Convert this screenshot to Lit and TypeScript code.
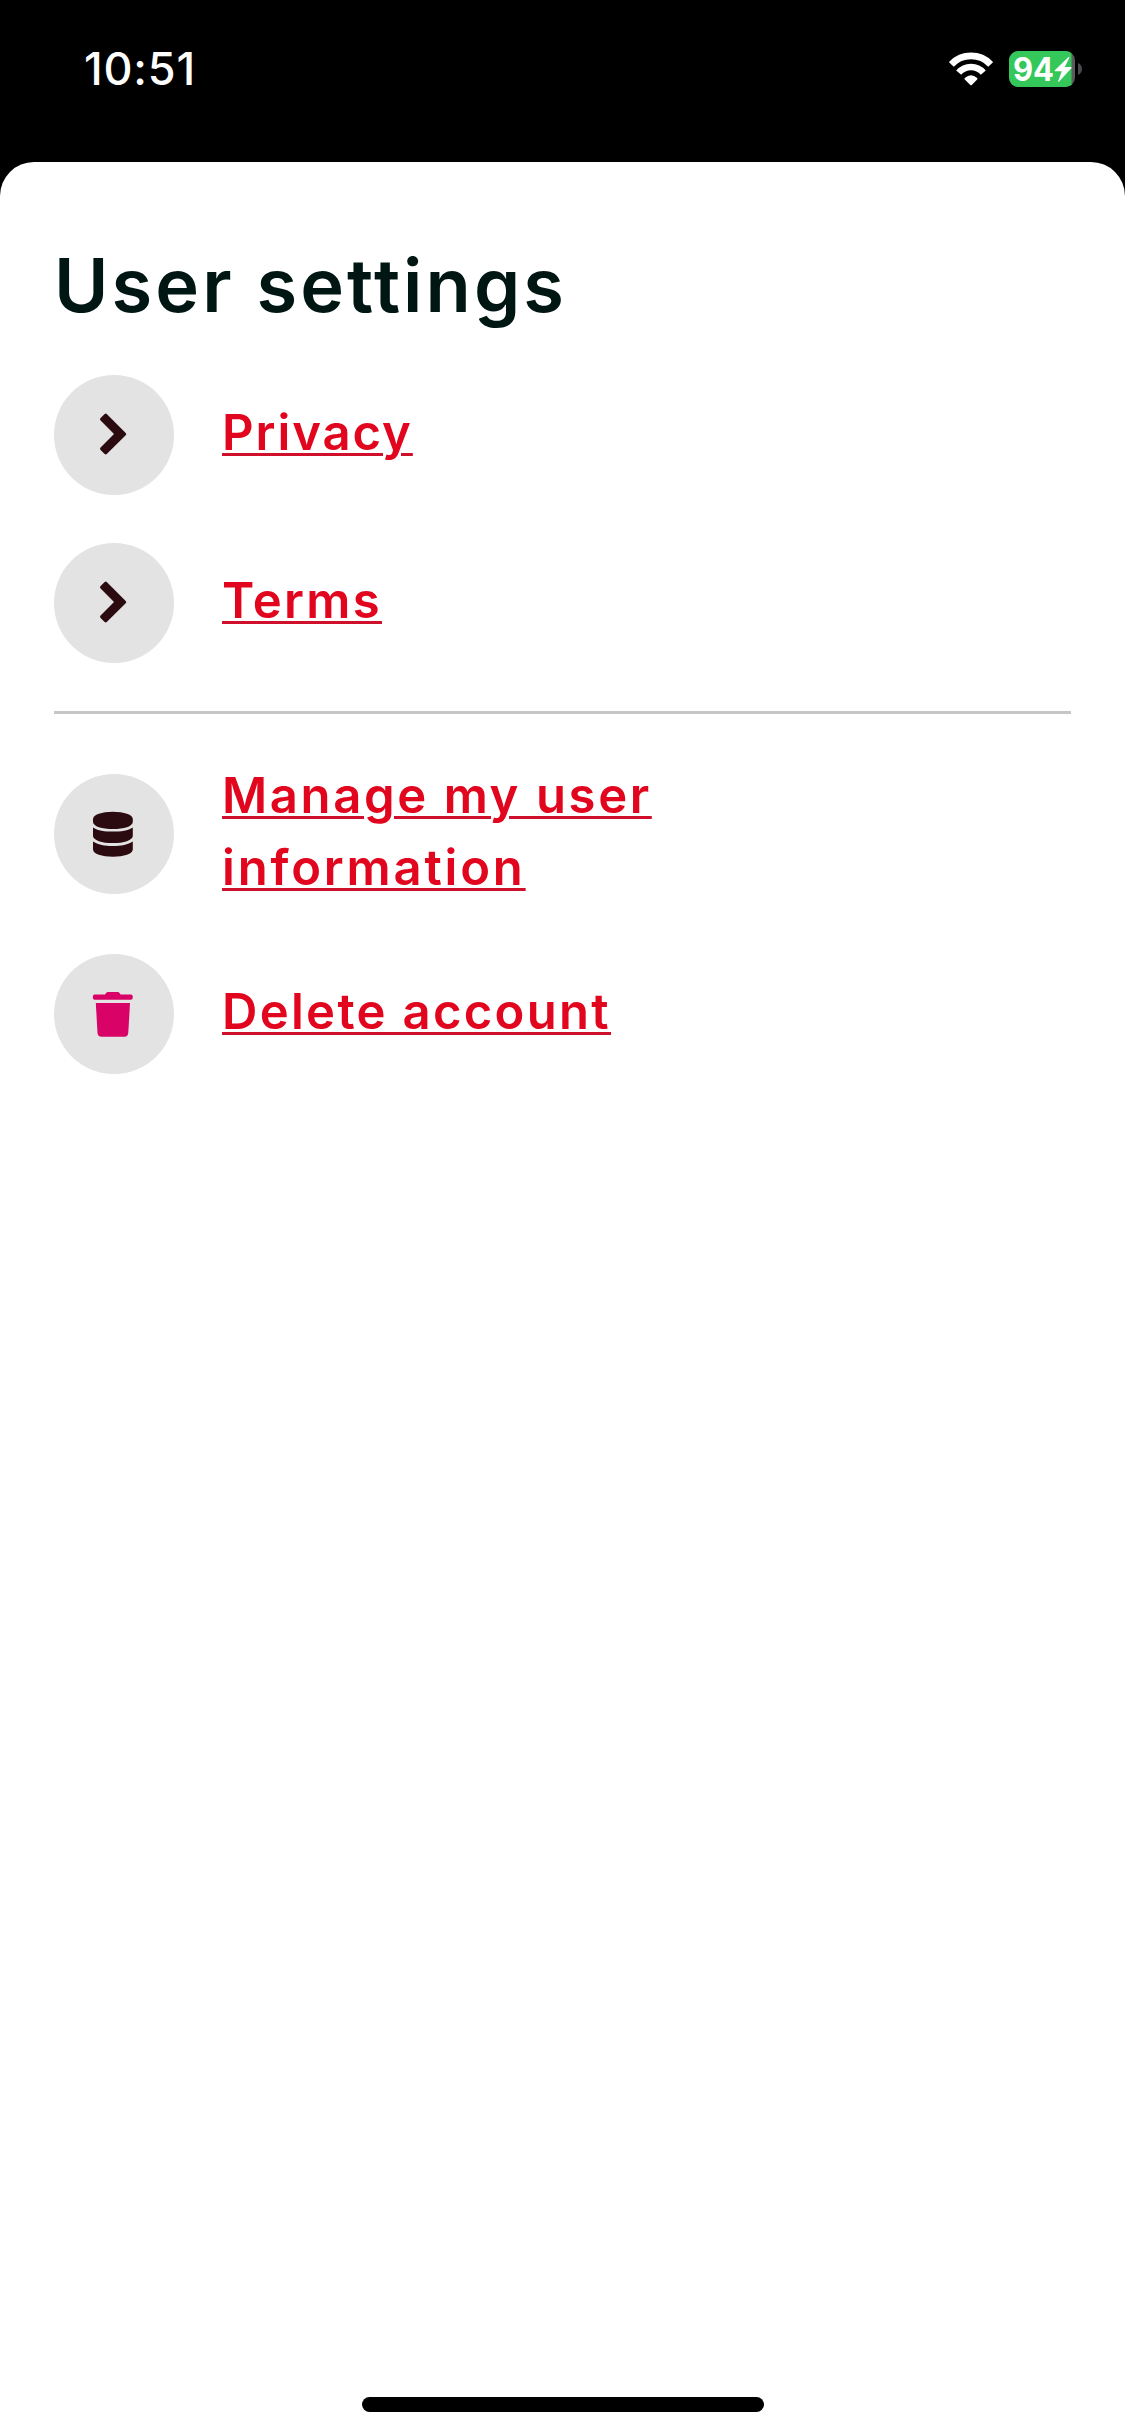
import { LitElement, html, css, svg } from "lit";
import { customElement, property } from "lit/decorators.js";
import { styleMap } from "lit/directives/style-map.js";

const icons = {
  chevron: svg`<path d="M16.600 15.600q-1.300-1.300 0-2.600l3.800-3.800q1.300-1.300 2.600 0l18.700 18.700q1.200 1.200 0 2.300l-18.700 18.600q-1.300 1.300-2.600 0l-3.800-3.800q-1.300-1.300 0-2.600L30 29z" />`,
  database: svg`<path d="M9 15.200c0-4.700 9-7.500 19.900-7.500s19.900 2.800 19.900 7.500v2.500c0 4.700-9 7.300-19.900 7.300s-19.900-2.600-19.900-7.300z" />
    <path d="M9 23.400c4.500 3 12 4.200 19.900 4.200s15.400-1.200 19.900-4.200v8.300c0 4.600-9 7.400-19.900 7.400s-19.900-2.800-19.900-7.400z" />
    <path d="M9 37.400c4.500 3.200 12 4.500 19.900 4.500s15.400-1.300 19.900-4.500v7.800c0 4.700-9 7.500-19.900 7.500s-19.900-2.800-19.900-7.500z" />`,
  trash: svg`<path d="M10.600 10.600h10.400l1.100-1.700q.6-1 1.900-1h9.600q1.300 0 1.900 1l1.100 1.700h10.400q1.700 0 1.700 1.700v1.800q0 1.700-1.700 1.700h-36.400q-1.700 0-1.700-1.700v-1.800q0-1.700 1.700-1.700z" />
    <path d="M11.800 19h34.200l-1.700 29.700q-.3 4-4 4h-22.800q-3.700 0-4-4z" />`,
};

interface Line {
  text: string;
  tracking: number;
}

interface Entry {
  icon: keyof typeof icons;
  lines: Line[];
}

const legal: Entry[] = [
  { icon: "chevron", lines: [{ text: "Privacy", tracking: 1.93 }] },
  { icon: "chevron", lines: [{ text: "Terms", tracking: 2.3 }] },
];

const account: Entry[] = [
  {
    icon: "database",
    lines: [
      { text: "Manage my user", tracking: 2.61 },
      { text: "information", tracking: 2.82 },
    ],
  },
  { icon: "trash", lines: [{ text: "Delete account", tracking: 2.31 }] },
];

@customElement("settings-row")
class SettingsRow extends LitElement {
  @property({ attribute: false }) entry!: Entry;

  static styles = css`
    :host {
      display: flex;
      align-items: center;
      gap: 48px;
    }
    .badge {
      flex: none;
      width: 120px;
      height: 120px;
      border-radius: 50%;
      background: #e3e3e3;
      display: flex;
      align-items: center;
      justify-content: center;
      color: #2b0a10;
    }
    .badge.trash {
      color: #d90368;
    }
    .icon {
      width: 60px;
      height: 60px;
      fill: currentColor;
    }
    .label {
      display: flex;
      flex-direction: column;
      align-items: flex-start;
      padding-bottom: 4px;
      margin: -2px 0;
      font: 600 49px/72px Inter, sans-serif;
      color: #e1051e;
    }
    .line {
      text-decoration: underline;
      text-decoration-color: #d00f2b;
      text-decoration-thickness: 3px;
      text-underline-offset: 3px;
    }
  `;

  render() {
    const { icon, lines } = this.entry;
    return html`<span class="badge ${icon}">
        <svg class="icon" viewBox="0 0 60 60">${icons[icon]}</svg>
      </span>
      <a class="label">
        ${lines.map(
          (l) => html`<span class="line" style=${styleMap({ letterSpacing: `${l.tracking}px` })}>${l.text}</span>`,
        )}
      </a>`;
  }
}

@customElement("app-root")
class AppRoot extends LitElement {
  static styles = css`
    :host {
      display: block;
    }
    .screen {
      height: 2436px;
      display: flex;
      flex-direction: column;
      background: #000;
      font-family: Inter, sans-serif;
      overflow: hidden;
    }
    .status {
      flex: none;
      box-sizing: border-box;
      height: 162px;
      padding: 42px 43px 66px 84px;
      display: flex;
      align-items: center;
      color: #fff;
    }
    .time {
      font-size: 45px;
      font-weight: 550;
      line-height: 54px;
      letter-spacing: 0.8px;
      margin-right: auto;
    }
    .wifi {
      width: 44px;
      height: 34px;
      margin-right: 16px;
      fill: none;
      stroke: #fff;
    }
    .wifi .dot {
      fill: #fff;
      stroke-width: 2;
      stroke-linejoin: round;
    }
    .battery {
      width: 73px;
      height: 36px;
      overflow: visible;
    }
    .percent {
      font: 700 32px Inter, sans-serif;
      fill: #fff;
    }
    .sheet {
      flex: 1;
      box-sizing: border-box;
      padding: 69px 54px 24px;
      background: #fff;
      border-radius: 34px 34px 0 0;
      display: flex;
      flex-direction: column;
    }
    .title {
      margin: 0 0 36px;
      font-size: 74px;
      font-weight: 600;
      line-height: 108px;
      letter-spacing: 3.1px;
      color: #001612;
    }
    .list {
      display: flex;
      flex-direction: column;
      gap: 48px;
    }
    .rule {
      height: 3px;
      background: #c6c6c6;
    }
    .home {
      margin: auto auto 0;
      width: 402px;
      height: 15px;
      border-radius: 8px;
      background: #000;
    }
  `;

  render() {
    return html`<div class="screen">
      <div class="status">
        <span class="time">10:51</span>
        <svg class="wifi" viewBox="0 0 44 34">
          <path d="M2.300 12.400A27.200 27.200 0 0 1 41.700 12.400" stroke-width="6.800" />
          <path d="M9.700 20.700A16.200 16.200 0 0 1 34.300 20.700" stroke-width="6.600" />
          <path class="dot" d="M16.500 26.700Q22 21.800 27.500 26.700L22 32.300z" />
        </svg>
        <svg class="battery" viewBox="0 0 73 36">
          <defs><clipPath id="body"><rect width="66" height="36" rx="9.500" /></clipPath></defs>
          <g clip-path="url(#body)">
            <rect width="66" height="36" fill="#5b5b5d" />
            <rect width="62.500" height="36" fill="#34c759" />
          </g>
          <path d="M69 12q4 1.800 4 6t-4 6z" fill="#4a4a4c" />
          <text class="percent" x="4" y="29.700" textLength="41" lengthAdjust="spacingAndGlyphs">94</text>
          <path d="M59.500 6L45.800 19.300q-.5 1 .6 1h6.400L49 30.500q.4.700 1.200 0L62.500 17q.4-1-.6-1h-6.200L60.500 6.500q-.2-.8-1-.5z" fill="#fff" />
        </svg>
      </div>
      <main class="sheet">
        <h1 class="title">User settings</h1>
        <div class="list">
          ${legal.map((e) => html`<settings-row .entry=${e}></settings-row>`)}
          <div class="rule"></div>
          ${account.map((e) => html`<settings-row .entry=${e}></settings-row>`)}
        </div>
        <div class="home"></div>
      </main>
    </div>`;
  }
}
